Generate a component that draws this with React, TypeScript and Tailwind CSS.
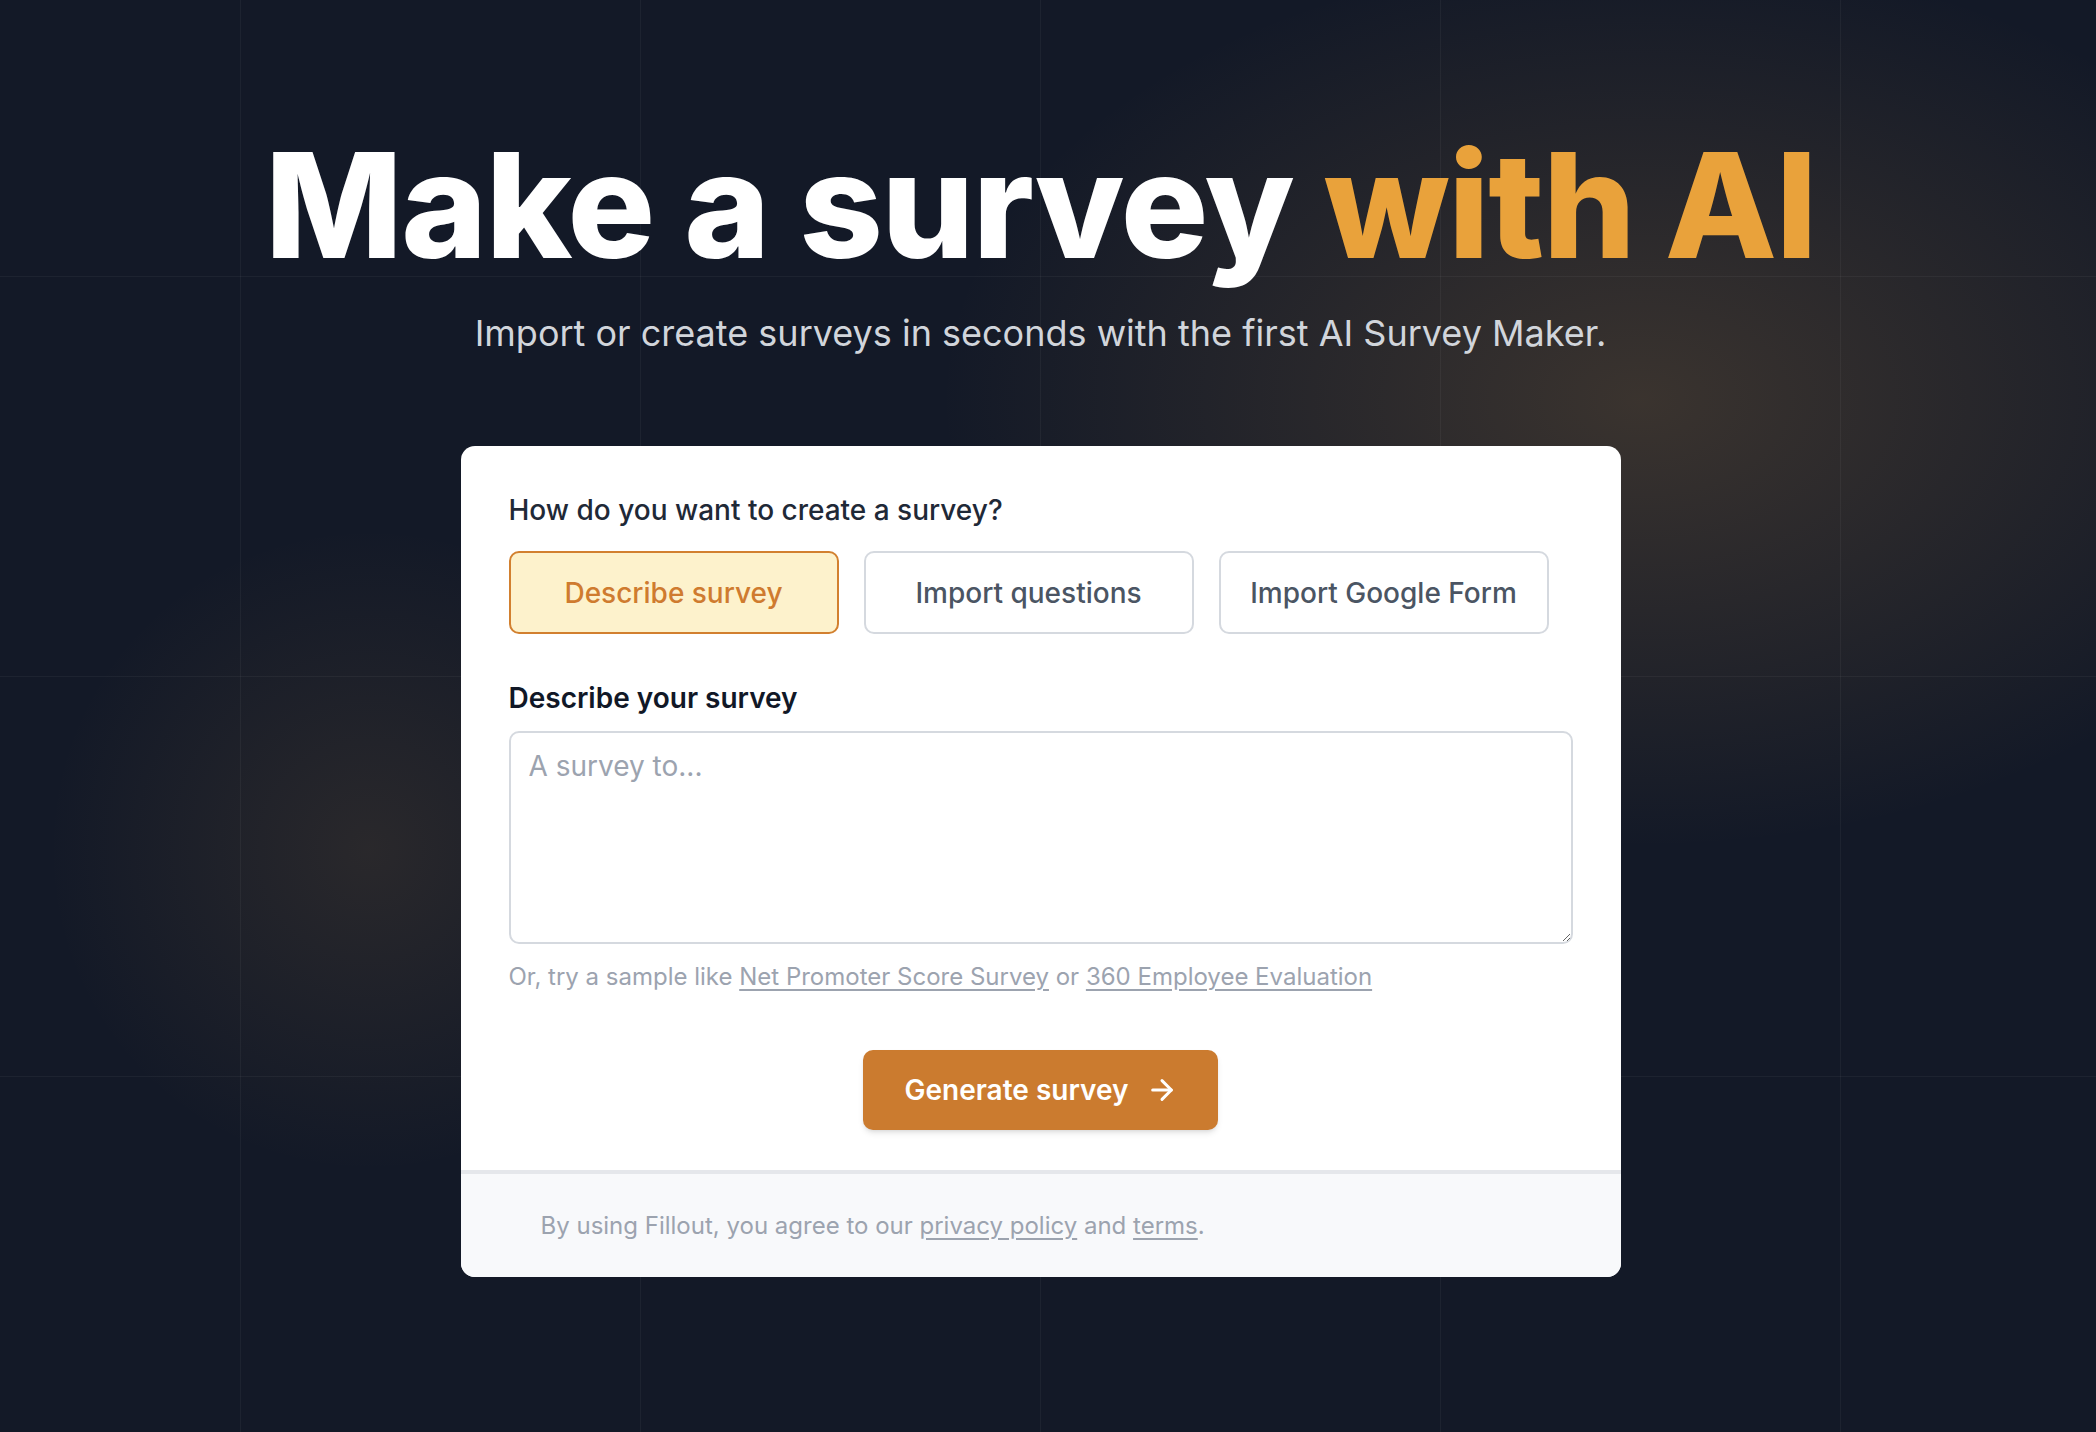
import { ArrowRight } from "lucide-react";

const MODES = [
  { label: "Describe survey", active: true },
  { label: "Import questions", active: false },
  { label: "Import Google Form", active: false },
];

export default function App() {
  return (
    <div className="min-h-screen w-full bg-[#131927] font-[Inter,sans-serif] [background-image:linear-gradient(to_right,rgba(255,255,255,0.045)_1px,transparent_1px),linear-gradient(to_bottom,rgba(255,255,255,0.045)_1px,transparent_1px),radial-gradient(ellipse_1000px_640px_at_1640px_400px,rgba(205,150,75,0.21),transparent_70%),radial-gradient(ellipse_460px_460px_at_370px_850px,rgba(205,150,75,0.12),transparent_70%)] [background-size:400px_400px,400px_400px,100%_100%,100%_100%] [background-position:240px_0,0_276px,0_0,0_0]">
      <div className="flex flex-col items-center pr-[15px] pt-[132px] pb-[155px]">
        <h1 className="text-[146px] font-extrabold leading-[146px] tracking-[-0.01em] text-white">
          Make a survey <span className="text-[#e9a23b]">with AI</span>
        </h1>
        <p className="mt-[31px] text-[36px] leading-[48px] text-[#d1d5db]">
          Import or create surveys in seconds with the first AI Survey Maker.
        </p>

        <div className="mt-[89px] w-[1160px] overflow-hidden rounded-[14px] bg-white">
          <div className="px-12 pt-[46px] pb-10">
            <p className="text-[28px] font-medium leading-[36px] text-[#1f2937]">
              How do you want to create a survey?
            </p>
            <div className="mt-[23px] flex gap-[25px]">
              {MODES.map((m) => (
                <button
                  key={m.label}
                  type="button"
                  className={`h-[83px] w-[330px] rounded-[10px] border-2 text-[28px] font-medium ${
                    m.active
                      ? "border-[#d2802f] bg-[#fdf2cc] text-[#cf7b2f]"
                      : "border-[#d5d9df] bg-white text-[#4b5563]"
                  }`}
                >
                  {m.label}
                </button>
              ))}
            </div>

            <label className="mt-[46px] block text-[28px] font-semibold leading-[36px] text-[#111827]">
              Describe your survey
            </label>
            <textarea
              placeholder="A survey to..."
              className="mt-[15px] block h-[213px] w-full rounded-[10px] border-2 border-[#d5d9df] px-[18px] py-[12px] text-[28px] leading-[42px] text-[#111827] outline-none placeholder:text-[#9ca3af]"
            />
            <p className="mt-[17px] text-[24px] leading-[32px] text-[#9ca3af]">
              Or, try a sample like{" "}
              <a href="#" className="underline underline-offset-4">
                Net Promoter Score Survey
              </a>{" "}
              or{" "}
              <a href="#" className="underline underline-offset-4">
                360 Employee Evaluation
              </a>
            </p>

            <div className="mt-[57px] flex justify-center">
              <button
                type="button"
                className="flex h-[80px] items-center gap-[18px] rounded-[10px] bg-[#cb7b2f] pl-[42px] pr-[40px] text-[28px] font-semibold text-white shadow-md"
              >
                Generate survey
                <ArrowRight size={32} strokeWidth={2.25} />
              </button>
            </div>
          </div>

          <div className="flex h-[107px] items-center border-t-4 border-[#e5e7eb] bg-[#f8f9fb] px-20 text-[24px] text-[#9ca3af]">
            <p>
              By using Fillout, you agree to our{" "}
              <a href="#" className="underline underline-offset-4">
                privacy policy
              </a>{" "}
              and{" "}
              <a href="#" className="underline underline-offset-4">
                terms
              </a>
              .
            </p>
          </div>
        </div>
      </div>
    </div>
  );
}
